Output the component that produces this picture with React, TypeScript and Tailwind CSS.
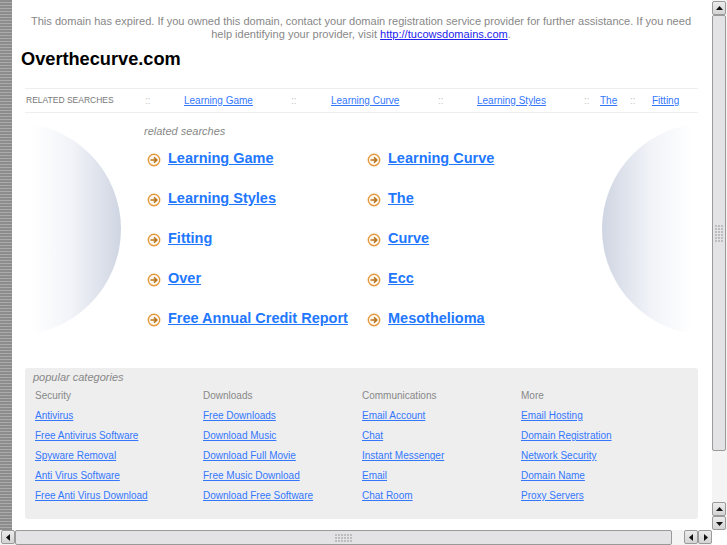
const searches = [
  ["Learning Game", "Learning Curve"],
  ["Learning Styles", "The"],
  ["Fitting", "Curve"],
  ["Over", "Ecc"],
  ["Free Annual Credit Report", "Mesothelioma"],
];

const categories = [
  { title: "Security", w: "w-[168px]", links: ["Antivirus", "Free Antivirus Software", "Spyware Removal", "Anti Virus Software", "Free Anti Virus Download"] },
  { title: "Downloads", w: "w-[159px]", links: ["Free Downloads", "Download Music", "Download Full Movie", "Free Music Download", "Download Free Software"] },
  { title: "Communications", w: "w-[159px]", links: ["Email Account", "Chat", "Instant Messenger", "Email", "Chat Room"] },
  { title: "More", w: "w-[150px]", links: ["Email Hosting", "Domain Registration", "Network Security", "Domain Name", "Proxy Servers"] },
];

function ArrowIcon() {
  return (
    <svg width="14" height="14" viewBox="0 0 14 14" className="mt-[3px] shrink-0">
      <circle cx="7" cy="7" r="5.7" fill="#fdf8ef" stroke="#e59a3c" strokeWidth="1.4" />
      <path d="M3.5 7H9.5M7 4.4L9.8 7L7 9.6" fill="none" stroke="#b9721c" strokeWidth="1.5" />
    </svg>
  );
}

function Disc({ side }: { side: "left" | "right" }) {
  const left = side === "left";
  return (
    <svg width="89" height="212" viewBox="0 0 89 212" className={left ? "absolute left-[32px] top-[123px]" : "absolute left-[602px] top-[123px]"}>
      <defs>
        <linearGradient id={`g-${side}`} gradientUnits="userSpaceOnUse" x1={left ? 0 : 89} x2={left ? 89 : 0} y1="0" y2="0">
          <stop offset="0" stopColor="#ffffff" />
          <stop offset="0.45" stopColor="#f1f3f8" />
          <stop offset="1" stopColor="#cfd5e2" />
        </linearGradient>
      </defs>
      <circle cx={left ? -17 : 106} cy="106" r="106" fill={`url(#g-${side})`} />
    </svg>
  );
}

function Grip({ cols, rows }: { cols: number; rows: number }) {
  return (
    <div className="grid gap-[1px]" style={{ gridTemplateColumns: `repeat(${cols}, 2px)` }}>
      {Array.from({ length: cols * rows }).map((_, i) => (
        <span key={i} className="h-[2px] w-[2px] bg-[#bdbdbd]" />
      ))}
    </div>
  );
}

function ScrollBtn({ dir }: { dir: "up" | "down" | "left" | "right" }) {
  const d = { up: "M1 6L4.5 2L8 6Z", down: "M1 3L4.5 7L8 3Z", left: "M6 1L2 4.5L6 8Z", right: "M3 1L7 4.5L3 8Z" }[dir];
  return (
    <div className="flex h-[14px] w-[14px] shrink-0 items-center justify-center rounded-[2px] border border-[#9a9a9a] bg-gradient-to-b from-[#ececec] to-[#d4d4d4]">
      <svg width="9" height="9" viewBox="0 0 9 9"><path d={d} fill="#111" /></svg>
    </div>
  );
}

function Sep() {
  return <span className="text-[10px] text-[#c4c4c4]">::</span>;
}

export default function App() {
  const link = "text-[#3377ff] underline";
  return (
    <div className="flex h-[545px] w-[727px] flex-col overflow-hidden bg-white font-['Liberation_Sans',Arial,sans-serif]">
      <div className="flex min-h-0 flex-1">
        <div className="w-[12px] shrink-0 bg-[repeating-linear-gradient(180deg,#8c8c8c_0px,#8c8c8c_2px,#ababab_2px,#ababab_3px)]" />
        <main className="relative min-w-0 flex-1">
          <div className="absolute left-[-12px] top-0 h-full w-[727px]">
            <Disc side="left" />
            <Disc side="right" />
          </div>
          <div className="relative">
            <p className="ml-[9px] w-[680px] pt-[15px] text-center text-[11.05px] leading-[13px] text-[#888888]">
              This domain has expired. If you owned this domain, contact your domain registration service provider for further assistance. If you need help identifying your provider, visit{" "}
              <a className="text-[#2222ee] underline">http://tucowsdomains.com</a>.
            </p>
            <h1 className="ml-[9px] mt-[7px] text-[18.2px] font-bold leading-[22px] text-black">Overthecurve.com</h1>
            <div className="ml-[13px] mt-[18px] flex h-[25px] w-[673px] items-center border-y border-[#eeeeee] pl-[1px] text-[10px]">
              <span className="w-[119px] shrink-0 text-[8.5px] text-[#777777]">RELATED SEARCHES</span>
              <span className="w-[39px]"><Sep /></span>
              <a className={`${link} w-[107px]`}>Learning Game</a>
              <span className="w-[40px]"><Sep /></span>
              <a className={`${link} w-[107px]`}>Learning Curve</a>
              <span className="w-[39px]"><Sep /></span>
              <a className={`${link} w-[107px]`}>Learning Styles</a>
              <span className="w-[16px]"><Sep /></span>
              <a className={`${link} w-[30px]`}>The</a>
              <span className="w-[22px]"><Sep /></span>
              <a className={link}>Fitting</a>
            </div>
            <div className="ml-[132px] mt-[12px] text-[11px] italic leading-[13px] text-[#888888]">related searches</div>
            <div className="ml-[135px] flex flex-col">
              {searches.map((row) => (
                <div key={row[0]} className="flex h-[40px] items-center">
                  {row.map((item) => (
                    <div key={item} className="flex w-[220px] items-center gap-[7px]">
                      <ArrowIcon />
                      <a className="text-[14.5px] font-bold leading-[20px] text-[#2277ff] underline">{item}</a>
                    </div>
                  ))}
                </div>
              ))}
            </div>
            <section className="ml-[13px] mt-[30px] h-[151px] w-[673px] rounded-[3px] bg-[#eeeeee] pl-[8px] pt-[3px]">
              <div className="text-[11px] italic leading-[13px] text-[#888888]">popular categories</div>
              <div className="ml-[2px] mt-[2px] flex">
                {categories.map((c) => (
                  <div key={c.title} className={`${c.w} flex flex-col text-[10px] leading-[20px]`}>
                    <span className="text-[#888888]">{c.title}</span>
                    {c.links.map((l) => (
                      <a key={l} className={link}>{l}</a>
                    ))}
                  </div>
                ))}
              </div>
            </section>
          </div>
        </main>
        <aside className="flex w-[15px] shrink-0 flex-col bg-[#f4f4f4] pt-[1px]">
          <ScrollBtn dir="up" />
          <div className="flex h-[436px] w-[14px] items-center justify-center rounded-[2px] border border-[#9a9a9a] bg-[#e3e3e6]">
            <Grip cols={3} rows={6} />
          </div>
          <div className="flex-1" />
          <ScrollBtn dir="up" />
          <ScrollBtn dir="down" />
        </aside>
      </div>
      <div className="flex h-[15px] shrink-0 bg-white">
        <div className="flex flex-1 bg-[#f4f4f4] pl-[1px]">
          <ScrollBtn dir="left" />
          <div className="flex w-[657px] items-center justify-center rounded-[2px] border border-[#9a9a9a] bg-[#e3e3e6]">
            <Grip cols={6} rows={3} />
          </div>
          <div className="flex-1" />
          <ScrollBtn dir="left" />
          <ScrollBtn dir="right" />
        </div>
        <div className="w-[15px]" />
      </div>
    </div>
  );
}
